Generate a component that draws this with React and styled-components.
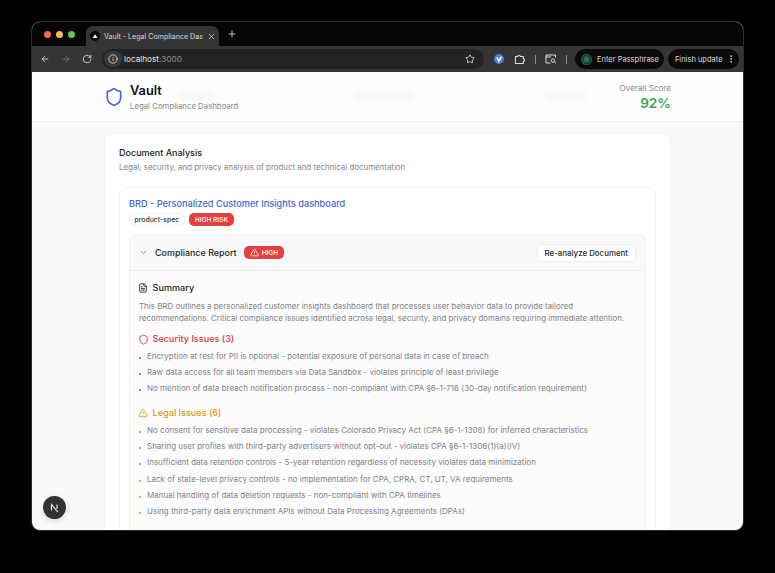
import React from 'react';
import styled, { createGlobalStyle } from 'styled-components';
import {
  ArrowLeft, ArrowRight, ChevronDown, EllipsisVertical, FileText, Info, Plus,
  RotateCw, Shield, Star, TriangleAlert, X,
} from 'lucide-react';

const Global = createGlobalStyle`
  html, body { margin: 0; padding: 0; background: #000; }
  body { font-family: Inter, "Liberation Sans", sans-serif; }
  * { box-sizing: border-box; }
`;

const Stage = styled.div`
  width: 775px;
  height: 573px;
  padding: 22px 32px 43px;
  background: #000;
`;

const Win = styled.div`
  position: relative;
  height: 100%;
  display: flex;
  flex-direction: column;
  overflow: hidden;
  border-radius: 8px;
  box-shadow: 0 0 0 1px #2e2e30;
  background: #f8f9fb;
`;

const TabStrip = styled.div`
  height: 24px;
  flex: none;
  display: flex;
  align-items: flex-end;
  padding-left: 8px;
  background: #050505;
`;

const Dots = styled.div`
  display: flex;
  gap: 5px;
  align-self: center;
  margin: 0 11.5px 0 3.5px;
`;

const Dot = styled.span`
  width: 7px;
  height: 7px;
  border-radius: 50%;
  background: ${p => p.$color};
`;

const Tab = styled.div`
  width: 133px;
  height: 20px;
  display: flex;
  align-items: center;
  gap: 4px;
  padding: 0 4px;
  border-radius: 7px 7px 0 0;
  background: #353537;
  color: #d8d8da;
  font-size: 7.1px;
  svg { flex: none; }
`;

const Favicon = styled.span`
  width: 10px;
  height: 10px;
  flex: none;
  display: flex;
  align-items: center;
  justify-content: center;
  border-radius: 50%;
  background: #050505;
  color: #fff;
  font-size: 5px;
`;

const TabTitle = styled.span`
  flex: 1;
  white-space: nowrap;
`;

const NewTab = styled.span`
  display: flex;
  align-self: center;
  margin-left: 8px;
  color: #e6e6e6;
`;

const Toolbar = styled.div`
  height: 26px;
  flex: none;
  display: flex;
  align-items: center;
  padding: 0 3px 0 8px;
  background: #353537;
  color: #dcdcdc;
`;

const NavIcons = styled.div`
  flex: none;
  display: flex;
  gap: 11px;
  width: 62px;
`;

const Omnibox = styled.div`
  flex: none;
  width: 382px;
  height: 20px;
  display: flex;
  align-items: center;
  gap: 2px;
  padding: 0 9px 0 2px;
  border-radius: 10px;
  background: #232325;
  font-size: 8.2px;
`;

const InfoChip = styled.span`
  width: 18px;
  height: 16px;
  display: flex;
  align-items: center;
  justify-content: center;
  border-radius: 8px;
  background: #39393b;
`;

const Url = styled.span`
  flex: 1;
  color: #e4e4e4;
  span { color: #8f8f91; }
`;

const Tools = styled.div`
  display: flex;
  align-items: center;
  margin-left: 10px;
  flex: 1;
`;

const ToolIcon = styled.svg`
  display: block;
  flex: none;
  margin-right: ${p => p.$right || 0}px;
`;

const Sep = styled.span`
  flex: none;
  width: 1px;
  height: 9px;
  margin: 0 8.5px 0 9px;
  background: #8b8b8d;
`;

const Pill = styled.div`
  flex: none;
  height: 20px;
  display: flex;
  align-items: center;
  gap: ${p => p.$gap}px;
  padding: 0 ${p => p.$right}px 0 ${p => p.$left}px;
  margin-right: 3.5px;
  border-radius: 10px;
  background: #0a0a0a;
  color: #dedede;
  font-size: 7.5px;
  white-space: nowrap;
`;

const SpinDot = styled.span`
  width: 11px;
  height: 11px;
  border-radius: 50%;
  border: 1.5px dotted #3c8f78;
  background: radial-gradient(#2f6f5f 30%, #15302b 70%);
`;

const Page = styled.div`
  flex: 1;
  min-height: 0;
  display: flex;
  flex-direction: column;
  overflow: hidden;
`;

const Header = styled.header`
  height: 50px;
  flex: none;
  display: flex;
  align-items: center;
  padding: 0 72px 0 71.5px;
  background: #fefefe;
  border-bottom: 1px solid #eeeff2;
`;

const Brand = styled.div`
  display: flex;
  align-items: center;
  gap: 6.5px;
  color: #3f68d6;
`;

const BrandName = styled.div`
  color: #111;
  font-size: 12.8px;
  font-weight: 600;
  line-height: 15px;
`;

const BrandSub = styled.div`
  margin-top: 3px;
  color: #85878d;
  font-size: 7.8px;
  line-height: 10px;
`;

const Blurred = styled.span`
  margin-left: ${p => p.$left}px;
  width: ${p => p.$width}px;
  height: 5px;
  border-radius: 3px;
  background: #eeeff1;
  filter: blur(4px);
`;

const Score = styled.div`
  margin-left: auto;
  padding-top: 2px;
  text-align: right;
`;

const ScoreLabel = styled.div`
  color: #85878d;
  font-size: 8.1px;
  line-height: 11px;
`;

const ScoreValue = styled.div`
  color: #43a356;
  font-size: 13.6px;
  font-weight: 600;
  line-height: 18px;
`;

const Main = styled.main`
  padding: 11px 72px 0;
`;

const Card = styled.section`
  width: 567px;
  padding: 13px 14px 0;
  background: #fff;
  border: 1px solid #eff0f3;
  border-radius: 8px;
`;

const CardTitle = styled.h2`
  margin: 0;
  color: #1a1a1c;
  font-size: 9px;
  font-weight: 500;
  line-height: 12px;
`;

const CardSub = styled.p`
  margin: 2px 0 0;
  color: #85878d;
  font-size: 7.9px;
  line-height: 12px;
`;

const DocCard = styled.div`
  margin-top: 14px;
  padding: 9px 9px 0;
  border: 1px solid #f0f1f4;
  border-radius: 7px;
`;

const DocLink = styled.div`
  color: #3f68d6;
  font-size: 9.2px;
  font-weight: 500;
  line-height: 13px;
`;

const TagRow = styled.div`
  display: flex;
  gap: 4px;
  margin-top: 3px;
`;

const Tag = styled.span`
  height: 13px;
  display: flex;
  align-items: center;
  padding: 0 4.5px;
  border: 1px solid #eeeff2;
  border-radius: 5px;
  color: #333;
  font-size: 6.9px;
  font-weight: 500;
`;

const RiskBadge = styled.span`
  height: 13px;
  display: flex;
  align-items: center;
  gap: 3px;
  padding: 0 6px;
  border-radius: 5px;
  background: #e5403f;
  color: #fff;
  font-size: 6.6px;
  font-weight: 500;
`;

const Report = styled.div`
  margin-top: 8px;
  border: 1px solid #eff0f3;
  border-radius: 6px;
  background: #fcfcfd;
`;

const ReportHead = styled.div`
  height: 36px;
  display: flex;
  align-items: center;
  padding: 0 9px;
  border-bottom: 1px solid #eceef1;
  background: #f8f9fa;
  border-radius: 6px 6px 0 0;
`;

const ReportTitle = styled.span`
  margin: 0 7px;
  color: #232325;
  font-size: 8.95px;
  font-weight: 500;
`;

const Reanalyze = styled.button`
  height: 18px;
  margin-left: auto;
  padding: 0 7px;
  border: 1px solid #eceef1;
  border-radius: 5px;
  background: #fff;
  color: #2a2a2c;
  font-family: inherit;
  font-size: 7.9px;
  font-weight: 500;
`;

const ReportBody = styled.div`
  padding: 10px 10px 40px 9px;
`;

const SectionHead = styled.div`
  display: flex;
  align-items: center;
  margin-top: ${p => p.$top || 0}px;
  color: ${p => p.$color};
  font-size: 9.1px;
  font-weight: 500;
  line-height: 14px;
`;

const IconSlot = styled.span`
  width: 8.6px;
  margin-right: 5px;
  display: flex;
  justify-content: center;
  svg { flex: none; }
`;

const Summary = styled.p`
  margin: 5px 0 0;
  color: #808288;
  font-size: 7.95px;
  line-height: 12px;
`;

const IssueList = styled.ul`
  margin: 2px 0 0;
  padding: 0;
  list-style: none;
`;

const Issue = styled.li`
  display: flex;
  align-items: baseline;
  height: 16.2px;
  color: #808288;
  font-size: 8px;
  line-height: 16px;
  white-space: nowrap;
  &::before {
    content: '';
    width: 2px;
    height: 2px;
    flex: none;
    margin-right: 6px;
    border-radius: 50%;
    background: ${p => p.$color};
  }
`;

const DevBadge = styled.div`
  position: absolute;
  left: 11px;
  bottom: 11px;
  width: 23px;
  height: 23px;
  display: flex;
  align-items: center;
  justify-content: center;
  border-radius: 50%;
  background: #333;
  box-shadow: 0 2px 6px rgba(0, 0, 0, 0.12);
`;

const securityIssues = [
  'Encryption at rest for PII is optional - potential exposure of personal data in case of breach',
  'Raw data access for all team members via Data Sandbox - violates principle of least privilege',
  'No mention of data breach notification process - non-compliant with CPA §6-1-716 (30-day notification requirement)',
];

const legalIssues = [
  'No consent for sensitive data processing - violates Colorado Privacy Act (CPA §6-1-1308) for inferred characteristics',
  'Sharing user profiles with third-party advertisers without opt-out - violates CPA §6-1-1306(1)(a)(IV)',
  'Insufficient data retention controls - 5-year retention regardless of necessity violates data minimization',
  'Lack of state-level privacy controls - no implementation for CPA, CPRA, CT, UT, VA requirements',
  'Manual handling of data deletion requests - non-compliant with CPA timelines',
  'Using third-party data enrichment APIs without Data Processing Agreements (DPAs)',
];

const App = () => (
  <Stage>
    <Global />
    <Win>
      <TabStrip>
        <Dots>
          <Dot $color="#ec6a5e" />
          <Dot $color="#f4bf4f" />
          <Dot $color="#61c554" />
        </Dots>
        <Tab>
          <Favicon>▲</Favicon>
          <TabTitle>Vault - Legal Compliance Das</TabTitle>
          <X size={9} />
        </Tab>
        <NewTab><Plus size={10} /></NewTab>
      </TabStrip>
      <Toolbar>
        <NavIcons>
          <ArrowLeft size={10} />
          <ArrowRight size={10} color="#77777a" />
          <RotateCw size={10} />
        </NavIcons>
        <Omnibox>
          <InfoChip><Info size={10} /></InfoChip>
          <Url>localhost<span>:3000</span></Url>
          <Star size={10} />
        </Omnibox>
        <Tools>
          <ToolIcon $right={10} width="10" height="10" viewBox="0 0 10 10">
            <circle cx="5" cy="5" r="5" fill="#4a7bd8" />
            <path d="M3 3.2l1.7 4L7.6 2.6" fill="none" stroke="#fff" strokeWidth="1.6" />
          </ToolIcon>
          <ToolIcon width="12" height="12" viewBox="0 0 12 12" fill="none" stroke="#dcdcdc" strokeWidth="1.1">
            <path d="M1.5 3.5h2.2a1.3 1.3 0 0 1 2.6 0h3v2.4a1.3 1.3 0 0 1 0 2.6v2h-7.800z" />
          </ToolIcon>
          <Sep />
          <ToolIcon width="12" height="10" viewBox="0 0 12 10" fill="none" stroke="#dcdcdc">
            <path d="M10.500 3.500V1H1v8h4.500" />
            <path d="M1 3h5" />
            <circle cx="8" cy="6.500" r="1.700" />
            <path d="M9.300 7.800l1.700 1.500" />
          </ToolIcon>
          <Sep />
          <Pill $left={6} $right={5.5} $gap={5}>
            <SpinDot />
            Enter Passphrase
          </Pill>
          <Pill $left={7} $right={3} $gap={3}>
            Finish update
            <EllipsisVertical size={10} />
          </Pill>
        </Tools>
      </Toolbar>
      <Page>
        <Header>
          <Brand>
            <Shield size={20} strokeWidth={2} />
            <div>
              <BrandName>Vault</BrandName>
              <BrandSub>Legal Compliance Dashboard</BrandSub>
            </div>
          </Brand>
          <Blurred $left={-58} $width={33} />
          <Blurred $left={141} $width={60} />
          <Blurred $left={130} $width={42} />
          <Score>
            <ScoreLabel>Overall Score</ScoreLabel>
            <ScoreValue>92%</ScoreValue>
          </Score>
        </Header>
        <Main>
          <Card>
            <CardTitle>Document Analysis</CardTitle>
            <CardSub>Legal, security, and privacy analysis of product and technical documentation</CardSub>
            <DocCard>
              <DocLink>BRD - Personalized Customer Insights dashboard</DocLink>
              <TagRow>
                <Tag>product-spec</Tag>
                <RiskBadge>HIGH RISK</RiskBadge>
              </TagRow>
              <Report>
                <ReportHead>
                  <ChevronDown size={9} color="#666" />
                  <ReportTitle>Compliance Report</ReportTitle>
                  <RiskBadge><TriangleAlert size={9} />HIGH</RiskBadge>
                  <Reanalyze>Re-analyze Document</Reanalyze>
                </ReportHead>
                <ReportBody>
                  <SectionHead $color="#1d1d1f">
                    <IconSlot><FileText size={10} /></IconSlot>
                    Summary
                  </SectionHead>
                  <Summary>
                    This BRD outlines a personalized customer insights dashboard that processes user behavior data to provide tailored recommendations. Critical compliance issues identified across legal, security, and privacy domains requiring immediate attention.
                  </Summary>
                  <SectionHead $color="#d8393f" $top={8}>
                    <IconSlot><Shield size={11} /></IconSlot>
                    Security Issues (3)
                  </SectionHead>
                  <IssueList>
                    {securityIssues.map(text => <Issue key={text} $color="#d8393f">{text}</Issue>)}
                  </IssueList>
                  <SectionHead $color="#d4991f" $top={9.5}>
                    <IconSlot><TriangleAlert size={10} /></IconSlot>
                    Legal Issues (6)
                  </SectionHead>
                  <IssueList>
                    {legalIssues.map(text => <Issue key={text} $color="#d4991f">{text}</Issue>)}
                  </IssueList>
                </ReportBody>
              </Report>
            </DocCard>
          </Card>
        </Main>
      </Page>
      <DevBadge>
        <svg width="11" height="11" viewBox="0 0 11 11" fill="none" stroke="#eee" strokeWidth="1.100">
          <path d="M2.500 8.500V2.500L8.800 10" />
          <path d="M8 2.500v4.500" />
        </svg>
      </DevBadge>
    </Win>
  </Stage>
);

export default App;
